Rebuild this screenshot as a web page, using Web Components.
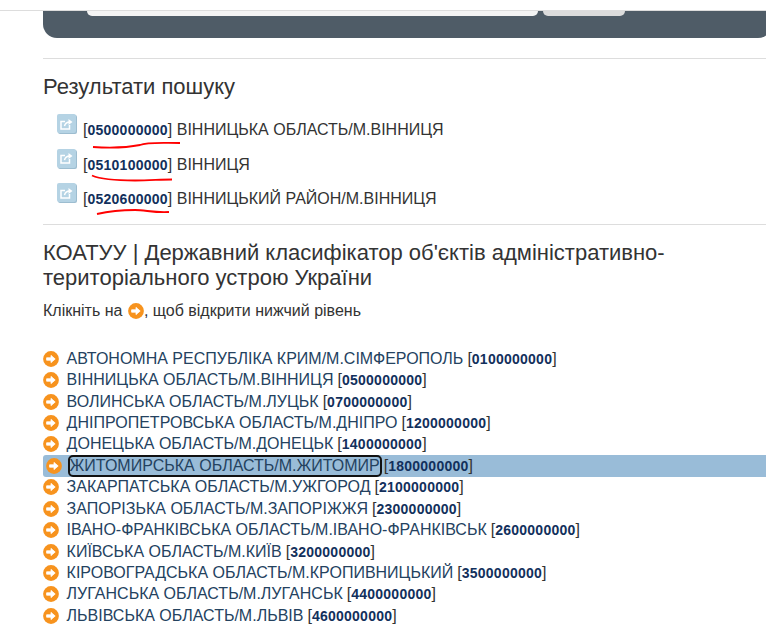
<!DOCTYPE html>
<html lang="uk">
<head>
<meta charset="utf-8">
<title>КОАТУУ</title>
<style>
  html, body { margin: 0; height: 625px; overflow: hidden; background: #fff; }
  body { font-family: "Liberation Sans", Arial, sans-serif; color: #333; }
</style>
</head>
<body>
<koatuu-page>
  <search-panel></search-panel>
  <search-results></search-results>
  <koatuu-tree></koatuu-tree>
</koatuu-page>

<script>
const ARROW = `<svg width="16" height="16" viewBox="0 0 16 16"><circle cx="8" cy="8" r="7.9" fill="#f7931e"/><path d="M3.6 6.8h4.4V4.4l4.2 3.6-4.2 3.6V9.2H3.6z" fill="#fff" stroke="#fff" stroke-width=".8" stroke-linejoin="round"/></svg>`;

class KoatuuPage extends HTMLElement {
  constructor() {
    super();
    this.attachShadow({ mode: 'open' }).innerHTML = `
      <style>
        :host { display: block; width: 766px; height: 625px; overflow: hidden; }
        .top { height: 10px; border-bottom: 1px solid #ddd; }
        .wrap { padding-left: 43px; margin-top: -1px; }
      </style>
      <div class="top"></div>
      <div class="wrap"><slot></slot></div>`;
  }
}

class SearchPanel extends HTMLElement {
  constructor() {
    super();
    this.attachShadow({ mode: 'open' }).innerHTML = `
      <style>
        :host { display: block; }
        .panel { height: 27px; background: #4f5c67; border-radius: 0 0 14px 14px; margin-top: 1px; margin-right: -6px; padding-left: 44px; display: flex; gap: 5px; align-items: flex-start; }
        .input { width: 451px; height: 5px; background: #f4f4f4; border-radius: 0 0 5px 5px; }
        .btn { width: 82px; height: 5px; background: #dcdcdc; border-radius: 0 0 5px 5px; }
        hr { border: 0; border-top: 1px solid #ddd; margin: 20px 0 0; }
      </style>
      <div class="panel"><div class="input"></div><div class="btn"></div></div>
      <hr>`;
  }
}

class SearchResults extends HTMLElement {
  static items = [
    ['0500000000', 'ВІННИЦЬКА ОБЛАСТЬ/М.ВІННИЦЯ', 'M8 8 C25 9 45 8 55 6 C62 3 75 4 95 4'],
    ['0510100000', 'ВІННИЦЯ', 'M7 1.5 C15 5 30 6.5 50 6.5 C65 6.5 75 5.5 87 5.5'],
    ['0520600000', 'ВІННИЦЬКИЙ РАЙОН/М.ВІННИЦЯ', 'M12 6 C25 3 38 2 50 2 C60 2 70 5 84 4'],
  ];
  constructor() {
    super();
    const rows = SearchResults.items.map(([code, name, line]) => `
      <div class="row">
        <span class="ico"><svg width="13" height="12" viewBox="0 0 13 12" fill="none" stroke="#fff" stroke-width="1.5"><path d="M9.5 7v4H1V3.5h4"/><path d="M4.5 8.2C5 5.5 7 4 10 4"/><path d="M8.5 1l4 3-4 3z" fill="#fff" stroke="none"/></svg></span>
        <span class="txt">[<b>${code}</b>] ${name}</span>
        <svg class="mark" width="110" height="12" viewBox="0 0 110 12"><path d="${line}" fill="none" stroke="#f00" stroke-width="1.8"/></svg>
      </div>`).join('');
    this.attachShadow({ mode: 'open' }).innerHTML = `
      <style>
        :host { display: block; }
        h3 { font-size: 22px; font-weight: 400; line-height: 24px; margin: 16px 0 0; color: #333; }
        .list { margin: 16px 0 0 14px; }
        .row { position: relative; display: flex; align-items: flex-start; height: 34.5px; }
        .ico { width: 19px; height: 19px; margin-top: -1px; background: #b5d3e4; border-radius: 2px; box-shadow: 1px 1px 0 #9dbdd0; display: flex; align-items: center; justify-content: center; flex: none; }
        .txt { font-size: 16px; line-height: 21px; margin: 4px 0 0 7px; white-space: nowrap; }
        b { color: #12305c; font-size: 14px; letter-spacing: .25px; }
        .mark { position: absolute; left: 28px; top: 24px; }
        hr { border: 0; border-top: 1px solid #ddd; margin: 5px 0 0; }
      </style>
      <h3>Результати пошуку</h3>
      <div class="list">${rows}</div>
      <hr>`;
  }
}

class KoatuuTree extends HTMLElement {
  static items = [
    ['АВТОНОМНА РЕСПУБЛІКА КРИМ/М.СІМФЕРОПОЛЬ', '0100000000'],
    ['ВІННИЦЬКА ОБЛАСТЬ/М.ВІННИЦЯ', '0500000000'],
    ['ВОЛИНСЬКА ОБЛАСТЬ/М.ЛУЦЬК', '0700000000'],
    ['ДНІПРОПЕТРОВСЬКА ОБЛАСТЬ/М.ДНІПРО', '1200000000'],
    ['ДОНЕЦЬКА ОБЛАСТЬ/М.ДОНЕЦЬК', '1400000000'],
    ['ЖИТОМИРСЬКА ОБЛАСТЬ/М.ЖИТОМИР', '1800000000', true],
    ['ЗАКАРПАТСЬКА ОБЛАСТЬ/М.УЖГОРОД', '2100000000'],
    ['ЗАПОРІЗЬКА ОБЛАСТЬ/М.ЗАПОРІЖЖЯ', '2300000000'],
    ['ІВАНО-ФРАНКІВСЬКА ОБЛАСТЬ/М.ІВАНО-ФРАНКІВСЬК', '2600000000'],
    ['КИЇВСЬКА ОБЛАСТЬ/М.КИЇВ', '3200000000'],
    ['КІРОВОГРАДСЬКА ОБЛАСТЬ/М.КРОПИВНИЦЬКИЙ', '3500000000'],
    ['ЛУГАНСЬКА ОБЛАСТЬ/М.ЛУГАНСЬК', '4400000000'],
    ['ЛЬВІВСЬКА ОБЛАСТЬ/М.ЛЬВІВ', '4600000000'],
  ];
  constructor() {
    super();
    const rows = KoatuuTree.items.map(([name, code, active]) => `
      <div class="row${active ? ' active' : ''}">${ARROW}<a>${name}</a><span>[<b>${code}</b>]</span></div>`).join('');
    this.attachShadow({ mode: 'open' }).innerHTML = `
      <style>
        :host { display: block; }
        h3 { font-size: 22px; font-weight: 400; line-height: 25px; margin: 15px 0 0; color: #333; }
        p { display: flex; align-items: center; font-size: 16px; line-height: 20px; margin: 11px 0 0; }
        p svg { margin: 0 0 0 1px; }
        .list { margin-top: 27.6px; }
        .row { display: flex; align-items: center; height: 21.43px; font-size: 16px; white-space: nowrap; color: #24425f; }
        .row a { margin-left: 7.6px; }
        .row span { margin-left: 4px; color: #333; }
        b { color: #12305c; font-size: 14px; letter-spacing: .25px; }
        .active { background: #99bcd8; border-radius: 3px 0 0 3px; padding-left: 3px; }
        .active a { outline: 2px solid #111; outline-offset: 0; border-radius: 3px; }
      </style>
      <h3>КОАТУУ | Державний класифікатор об'єктів адміністративно-територіального устрою України</h3>
      <p>Клікніть на&nbsp;${ARROW}, щоб відкрити нижчий рівень</p>
      <div class="list">${rows}</div>`;
  }
}

customElements.define('koatuu-page', KoatuuPage);
customElements.define('search-panel', SearchPanel);
customElements.define('search-results', SearchResults);
customElements.define('koatuu-tree', KoatuuTree);
</script>
</body>
</html>
